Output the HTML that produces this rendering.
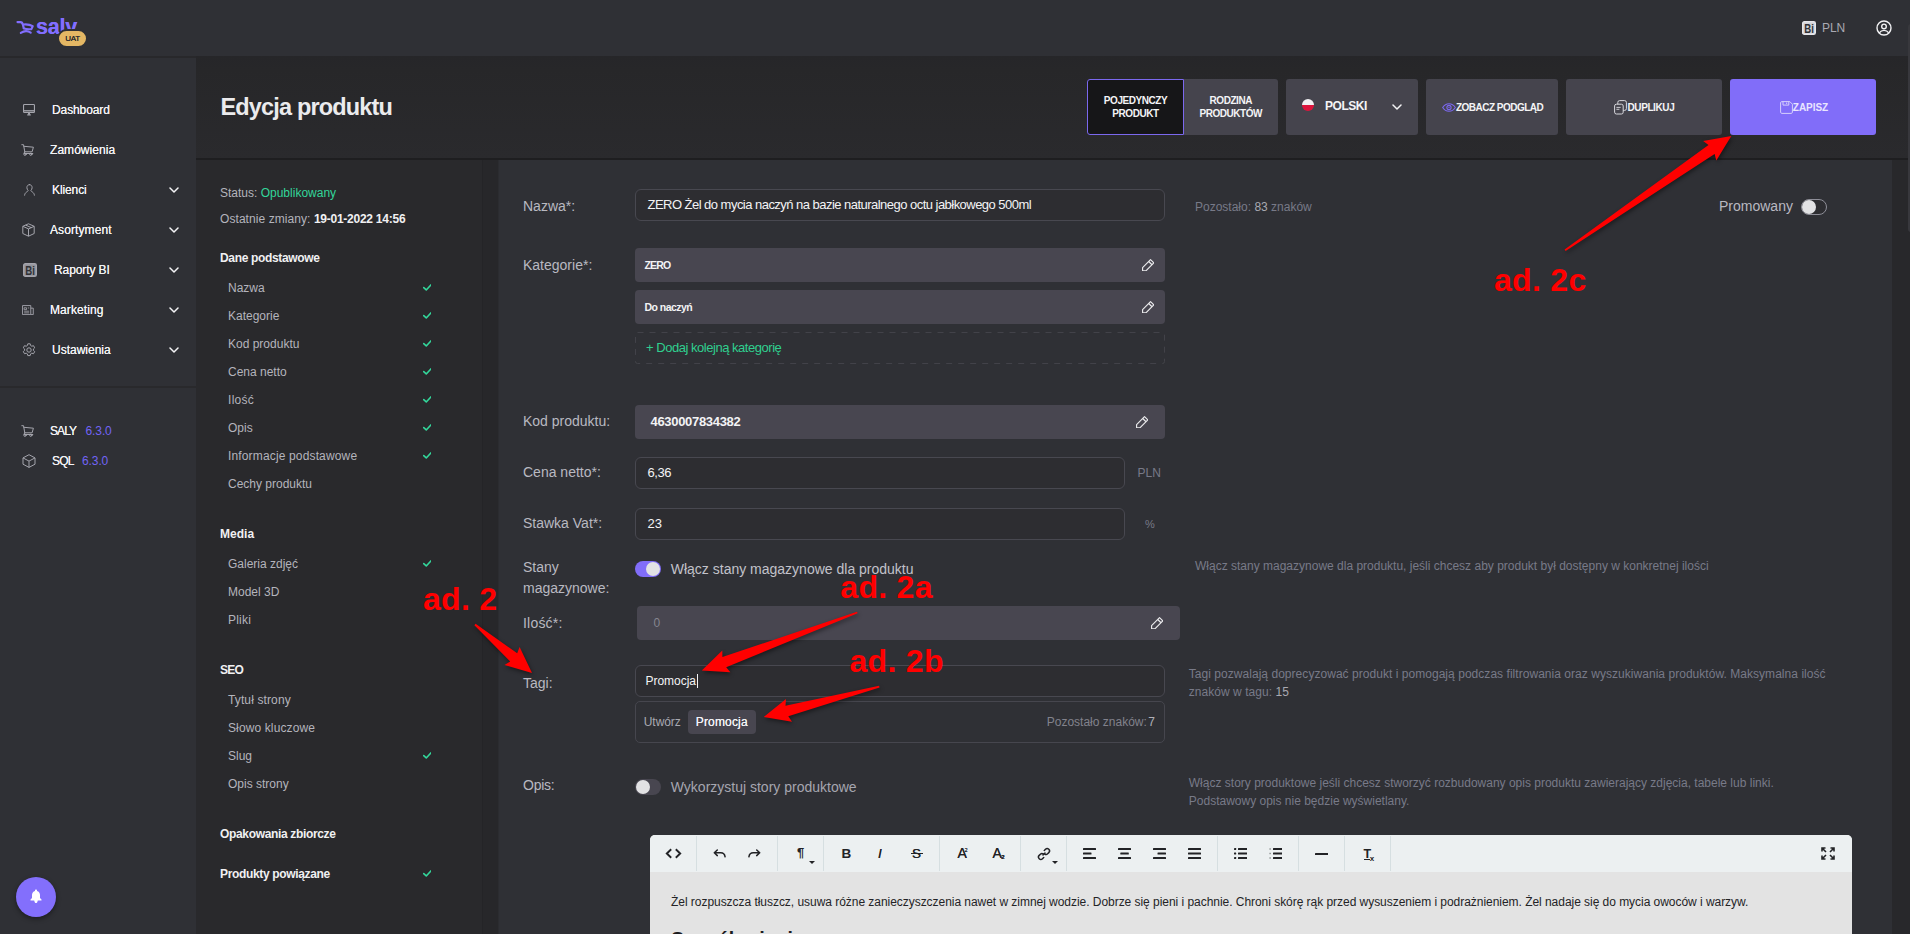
<!DOCTYPE html>
<html lang="pl">
<head>
<meta charset="utf-8">
<title>Edycja produktu</title>
<style>
*{box-sizing:border-box;margin:0;padding:0}
html,body{width:1910px;height:934px;overflow:hidden;background:#28282b;font-family:"Liberation Sans",Arial,sans-serif;color:#e6e6ea}
body{position:relative}
.abs{position:absolute;white-space:nowrap;line-height:1}
/* top bar */
#topbar{position:absolute;left:0;top:0;width:1910px;height:56px;background:#2f3035}
#sidebar{position:absolute;left:0;top:58px;width:196px;height:876px;background:#2f3035}
#sidebar .divider{position:absolute;left:0;top:328px;width:196px;height:2px;background:#29292c}
.mi{position:absolute;left:0;width:196px;height:40px}
.mi .t{position:absolute;top:13px;font-size:12px;line-height:14px;color:#f2f2f4;white-space:nowrap;letter-spacing:-0.1px;text-shadow:0 0 0.4px #f2f2f4}
.mi svg{position:absolute}
.mi .chev{left:169px;top:16.5px}
.mi .ver{color:#7264f6;text-shadow:none}
/* page header */
#pagehead{position:absolute;left:196px;top:56px;width:1714px;height:102px;background:linear-gradient(180deg,#262629 0,#272729 14%,#2a2a2d 100%)}
#headline{position:absolute;left:196px;top:158px;width:1714px;height:2px;background:#1e1e20}
h1{position:absolute;left:24.5px;top:37px;font-size:23.5px;line-height:28px;font-weight:bold;color:#ebebed;white-space:nowrap;letter-spacing:-0.84px}
.btn{position:absolute;top:23px;height:55.5px;border-radius:3px;background:#45444d;color:#f4f4f6;font-weight:bold;font-size:9px;text-align:center;white-space:nowrap}
/* left nav */
#leftnav{position:absolute;left:196px;top:160px;width:286px;height:774px;background:#29292c}
#gutter{position:absolute;left:482px;top:160px;width:16px;height:774px;background:#27272a;border-left:1px solid #242427}
#rightgutter{position:absolute;left:1892px;top:160px;width:18px;height:774px;background:#28282b}
#leftnav .ln{position:absolute;font-size:12px;line-height:14px;white-space:nowrap;color:#b4b4bc;letter-spacing:0}
#leftnav .h{font-weight:bold;color:#f0f0f2;left:24px;letter-spacing:-0.34px}
#leftnav .i{left:32px}
#leftnav svg.ck{position:absolute;left:226.7px;width:8.8px;height:7px;margin-top:.5px}
/* form */
#form{position:absolute;left:498px;top:160px;width:1394px;height:774px;background:#2f3035;overflow:hidden}
.lbl{position:absolute;left:25px;font-size:14px;line-height:21px;color:#b9b9c1;white-space:nowrap;letter-spacing:0}
.inp{position:absolute;left:136.5px;height:32px;border:1px solid #484850;border-radius:6px;background:#2d2d31;color:#f3f3f5;font-size:13px;line-height:30px;padding-left:12px;white-space:nowrap;letter-spacing:-0.3px}
.box{position:absolute;left:136.5px;height:33.5px;border-radius:4px;background:#484650;color:#f3f3f5;font-weight:bold;white-space:nowrap}
.hint{position:absolute;font-size:12px;line-height:18px;color:#787a88;white-space:nowrap;letter-spacing:0}
.hint b{font-weight:normal;color:#a9a9b1}
.tog{position:absolute;width:26px;height:16px;border-radius:8px}
.tog i{position:absolute;top:1px;width:14px;height:14px;border-radius:7px;background:#e2e2e4}
.red{position:absolute;font-weight:bold;color:#ff0000;font-size:32px;line-height:32px;letter-spacing:.3px;margin-top:.5px;white-space:nowrap;font-family:"Liberation Sans",Arial,sans-serif}
#anno{position:absolute;left:0;top:0;width:1910px;height:934px;pointer-events:none}
</style>
</head>
<body>
<header id="topbar">
<svg class="abs" style="left:14px;top:18px" width="24" height="18" viewBox="14 18 24 18" fill="none" stroke="#826eff" stroke-linecap="round" stroke-linejoin="round"><path d="M17.500 22.100h2.900c1.700 0 2.200 1.200 2.500 2.600l.8 3.300" stroke-width="2.200"/><path d="M23.600 24.500c3.400-.3 6.800.3 9.100 1.700l-1.300 2.900c-2.500.300-5.200.100-7.600-.500" stroke-width="2.100"/><path d="M20.800 32.900c3.100-2.100 7.200-2.100 9.900-.200" stroke-width="2.100"/></svg>
<div class="abs" id="logo" style="left:36px;top:15px;font-size:21.5px;line-height:24px;font-weight:bold;color:#826eff;letter-spacing:-0.2px;text-shadow:0 0 .6px #826eff">saly</div>
<div class="abs" id="uat" style="left:57px;top:29px;width:31px;height:19px;border:2px solid #2f3035;border-radius:10px;background:#e4b764;color:#2b2b2e;font-size:8px;line-height:15px;text-align:center;letter-spacing:-0.25px;text-shadow:0 0 .45px #2b2b2e">UAT</div>
<svg class="abs" style="left:1802px;top:21px" width="14" height="14" viewBox="0 0 14 14"><rect x=".7" y=".7" width="12.600" height="12.600" rx="1.600" fill="#e6e6ea" fill-opacity=".9" stroke="#e6e6ea" stroke-width="1.400"/><text x="3" y="11.700" transform="scale(.74 1)" font-family="Liberation Sans,Arial,sans-serif" font-weight="bold" font-size="13" fill="#2f3035">Bi</text></svg>
<div class="abs" id="pln" style="left:1822px;top:21px;font-size:12px;line-height:14px;color:#a9a9b2;letter-spacing:-0.12px">PLN</div>
<svg class="abs" style="left:1876px;top:20px" width="16" height="16" viewBox="0 0 16 16" fill="none" stroke="#f2f2f4" stroke-width="1.400"><circle cx="8" cy="8" r="7"/><circle cx="8" cy="6.400" r="2.300"/><path d="M3.300 12.900c1.300-1.800 2.900-2.500 4.700-2.500s3.400.7 4.700 2.500"/></svg>
</header>
<aside id="sidebar">
<div class="mi" style="top:32px"><svg style="left:23px;top:14px" width="12" height="12" viewBox="0 0 12 12" fill="none" stroke="#a4a4ac" stroke-width="1.100"><rect x=".55" y=".55" width="10.900" height="7.900" rx=".8"/><path d="M.6 6.800h10.800" stroke-width="1.400"/><path d="M4.200 10.900h3.600" stroke-width="1.200"/><path d="M6 8.500v2.200" stroke-width="2"/></svg><span class="t" style="left:52px">Dashboard</span></div>
<div class="mi" style="top:72px"><svg style="left:21px;top:14px" width="14" height="12" viewBox="0 0 14 12" fill="none" stroke="#a4a4ac" stroke-width="1" stroke-linejoin="round" stroke-linecap="round"><path d="M.8.700h1.700l1.300 7.100M3 2.300l9.400.9-1.300 4.600H3.800M3.800 7.800l-1 1.700h9"/><circle cx="4" cy="10.300" r="1.100"/><circle cx="9.800" cy="10.300" r="1.100"/></svg><span class="t" style="left:50px;letter-spacing:0.05px">Zamówienia</span></div>
<div class="mi" style="top:112px"><svg style="left:24px;top:14px" width="11" height="12" viewBox="0 0 11 12" fill="none" stroke="#a4a4ac" stroke-width="1" stroke-linecap="round"><path d="M5.500.600c1.500 0 2.600 1.300 2.600 3 0 1.200-.5 2.200-1.200 2.800 0 1.600 3.300 1.300 3.500 4.800M5.500.600c-1.500 0-2.600 1.300-2.600 3 0 1.200.5 2.200 1.200 2.800 0 1.600-3.300 1.300-3.500 4.800"/></svg><span class="t" style="left:52px">Klienci</span><svg class="chev" width="10" height="6" viewBox="0 0 10 6" fill="none" stroke="#f4f4f6" stroke-width="1.500" stroke-linecap="round" stroke-linejoin="round"><path d="M1 1l4 4 4-4"/></svg></div>
<div class="mi" style="top:152px"><svg style="left:22px;top:13px" width="13" height="14" viewBox="0 0 13 14" fill="none" stroke="#a4a4ac" stroke-width="1" stroke-linejoin="round"><path d="M6.500.8l5.700 2.500v7.200l-5.700 2.700-5.700-2.700V3.300z"/><path d="M.8 3.300l5.700 2.600 5.700-2.600M6.500 5.900v7.300"/><path d="M3.600 2.100l5.800 2.600"/></svg><span class="t" style="left:50px;letter-spacing:0.10px">Asortyment</span><svg class="chev" width="10" height="6" viewBox="0 0 10 6" fill="none" stroke="#f4f4f6" stroke-width="1.500" stroke-linecap="round" stroke-linejoin="round"><path d="M1 1l4 4 4-4"/></svg></div>
<div class="mi" style="top:192px"><svg style="left:23px;top:13px" width="14" height="14" viewBox="0 0 14 14"><rect x=".7" y=".7" width="12.600" height="12.600" rx="1.600" fill="#a4a4ac" fill-opacity=".85" stroke="#a4a4ac" stroke-width="1.400"/><text x="3" y="11.700" transform="scale(.74 1)" font-family="Liberation Sans,Arial,sans-serif" font-weight="bold" font-size="13" fill="#2f3035">Bi</text></svg><span class="t" style="left:54px">Raporty BI</span><svg class="chev" width="10" height="6" viewBox="0 0 10 6" fill="none" stroke="#f4f4f6" stroke-width="1.500" stroke-linecap="round" stroke-linejoin="round"><path d="M1 1l4 4 4-4"/></svg></div>
<div class="mi" style="top:232px"><svg style="left:22px;top:15px" width="12" height="10.200" viewBox="0 0 13 11" fill="none" stroke="#a4a4ac" stroke-width="1" stroke-linejoin="round"><path d="M.6.600h8.900v9.800H.6z"/><path d="M9.500 3.400h2.700v7H9.500"/><path d="M2.300 3h2.600v2H2.300zM6.300 3.200h1.500M2.300 6.700h5.500M2.300 8.500h5.500" stroke-width=".9"/></svg><span class="t" style="left:50px;letter-spacing:0.10px">Marketing</span><svg class="chev" width="10" height="6" viewBox="0 0 10 6" fill="none" stroke="#f4f4f6" stroke-width="1.500" stroke-linecap="round" stroke-linejoin="round"><path d="M1 1l4 4 4-4"/></svg></div>
<div class="mi" style="top:272px"><svg style="left:22px;top:13px" width="14" height="14" viewBox="0 0 14 14" fill="none" stroke="#a4a4ac" stroke-width="1" stroke-linejoin="round"><circle cx="7" cy="7" r="2.200"/><path d="M5.800.8h2.400l.4 1.700 1.200.7 1.700-.5 1.200 2.100-1.300 1.200v1.400l1.300 1.200-1.200 2.100-1.700-.5-1.200.7-.4 1.700H5.800l-.4-1.700-1.200-.7-1.700.5-1.200-2.100 1.300-1.200V6l-1.300-1.200 1.200-2.100 1.700.5 1.200-.7z"/></svg><span class="t" style="left:52px;letter-spacing:0.00px">Ustawienia</span><svg class="chev" width="10" height="6" viewBox="0 0 10 6" fill="none" stroke="#f4f4f6" stroke-width="1.500" stroke-linecap="round" stroke-linejoin="round"><path d="M1 1l4 4 4-4"/></svg></div>
<div class="divider"></div>
<div class="mi" style="top:353px"><svg style="left:21px;top:14px" width="14" height="12" viewBox="0 0 14 12" fill="none" stroke="#a4a4ac" stroke-width="1" stroke-linejoin="round" stroke-linecap="round"><path d="M.8.700h1.700l1.300 7.100M3 2.300l9.400.9-1.300 4.600H3.800M3.800 7.800l-1 1.700h9"/><circle cx="4" cy="10.300" r="1.100"/><circle cx="9.800" cy="10.300" r="1.100"/></svg><span class="t" style="left:50px;letter-spacing:-0.9px">SALY</span><span class="t ver" style="left:85.500px">6.3.0</span></div>
<div class="mi" style="top:383px"><svg style="left:22px;top:13px" width="14" height="14" viewBox="0 0 14 14" fill="none" stroke="#a4a4ac" stroke-width="1" stroke-linejoin="round"><path d="M7 .7l6 3.200v6.300l-6 3.200-6-3.200V3.900z"/><path d="M1 3.900l6 3.200 6-3.200M7 7.100v6.300"/></svg><span class="t" style="left:52px;letter-spacing:-0.8px">SQL</span><span class="t ver" style="left:82px">6.3.0</span></div>
<div id="bell" style="position:absolute;left:16px;top:819px;width:40px;height:40px;border-radius:50%;background:#836ffc;box-shadow:0 2px 5px rgba(0,0,0,.4)"><svg style="position:absolute;left:14.300px;top:11.700px" width="12" height="15" viewBox="0 0 12 15" fill="#ffffff"><path d="M6 .6c.6 0 1 .4 1 1v.5c1.900.5 3 2.100 3 4v2.800l1.500 1.700v.8h-3.700c-.3 1.700-1 2.600-1.800 2.600s-1.500-.9-1.800-2.600H.5v-.8L2 8.900V6.100c0-1.900 1.100-3.500 3-4v-.5c0-.6.4-1 1-1z"/></svg></div>
</aside>
<section id="pagehead">
<h1>Edycja produktu</h1>
<div class="btn" id="b1" style="left:891px;width:97px;background:#161618;border:1px solid #7b68ee;border-radius:3px 0 0 3px;line-height:13px;padding-top:14px;font-size:10px;letter-spacing:-0.45px">POJEDYNCZY<br>PRODUKT</div>
<div class="btn" id="b2" style="left:988px;width:93.500px;border-radius:0 3px 3px 0;line-height:13px;padding-top:15px;font-size:10px;letter-spacing:-0.45px">RODZINA<br>PRODUKTÓW</div>
<div class="btn" id="b3" style="left:1090px;width:132px">
<div class="abs" style="left:15.500px;top:19.800px;width:12.500px;height:12.500px;border-radius:50%;background:linear-gradient(#f1f1f3 0 50%,#dc143c 50% 100%)"></div>
<span class="abs" id="polski" style="left:39px;top:20px;font-size:12px;line-height:14px;letter-spacing:-0.46px">POLSKI</span>
<svg class="abs" style="left:105.500px;top:25px" width="10" height="6" viewBox="0 0 10 6" fill="none" stroke="#f4f4f6" stroke-width="1.500" stroke-linecap="round" stroke-linejoin="round"><path d="M1 1l4 4 4-4"/></svg>
</div>
<div class="btn" id="b4" style="left:1230px;width:131.500px">
<svg class="abs" style="left:16px;top:23.500px" width="14" height="9" viewBox="0 0 14 9" fill="none" stroke="#7b68ee" stroke-width="1.100"><path d="M.7 4.500C2.300 1.900 4.500.700 7 .7s4.700 1.200 6.300 3.800C11.700 7.100 9.500 8.300 7 8.300S2.300 7.100.7 4.500z"/><circle cx="7" cy="4.500" r="2.100"/><circle cx="7" cy="4.500" r=".7" fill="#7b68ee" stroke="none"/></svg>
<span class="abs" id="zobacz" style="left:30px;top:22.500px;font-size:10px;line-height:12px;letter-spacing:-0.52px">ZOBACZ PODGLĄD</span>
</div>
<div class="btn" id="b5" style="left:1370px;width:156px">
<svg class="abs" style="left:48px;top:21px" width="13" height="15" viewBox="0 0 13 15" fill="none" stroke="#d9d9de" stroke-width="1"><rect x="3.800" y=".6" width="8.600" height="9.800" rx="1.800"/><rect x=".6" y="4.200" width="8.600" height="9.800" rx="1.800" fill="#45444d"/><path d="M2.400 7.400h4.200M2.400 9.300h3" stroke-width=".9"/></svg>
<span class="abs" id="dupl" style="left:61.500px;top:22.500px;font-size:10px;line-height:12px;letter-spacing:-0.4px">DUPLIKUJ</span>
</div>
<div class="btn" id="b6" style="left:1534px;width:146px;background:#816df9;color:#e9e5ff">
<svg class="abs" style="left:49.500px;top:22px" width="13" height="13" viewBox="0 0 13 13" fill="none" stroke="#d6cffc" stroke-width="1" stroke-linejoin="round"><path d="M.6 1.800c0-.7.5-1.200 1.200-1.200h8l2.600 2.600v8c0 .7-.5 1.200-1.200 1.200H1.800c-.7 0-1.200-.5-1.200-1.200z"/><path d="M3 .7v3.400h5.800V.7M6.700 1.500v1.600"/></svg>
<span class="abs" id="zapisz" style="left:62.800px;top:22.500px;font-size:10px;line-height:12px;letter-spacing:-0.03px">ZAPISZ</span>
</div>
</section>
<div id="headline"></div>
<nav id="leftnav">
<div class="ln" id="st" style="left:24px;top:25.55px">Status: <span style="color:#33d69a">Opublikowany</span></div>
<div class="ln" id="oz" style="left:24px;top:51.8px;letter-spacing:0.07px">Ostatnie zmiany: <b style="color:#f0f0f2;letter-spacing:-0.25px">19-01-2022 14:56</b></div>
<div class="ln h" id="n1" style="top:90.55px">Dane podstawowe</div>
<div class="ln i" id="n2" style="top:120.55px">Nazwa</div><svg class="ck" style="top:123.5px" viewBox="0 0 10 8" fill="none" stroke="#33d69a" stroke-width="1.900" stroke-linecap="round" stroke-linejoin="round"><path d="M.8 4.200l2.900 2.600L9.200.9"/></svg>
<div class="ln i" id="n3" style="top:148.55px">Kategorie</div><svg class="ck" style="top:151.5px" viewBox="0 0 10 8" fill="none" stroke="#33d69a" stroke-width="1.900" stroke-linecap="round" stroke-linejoin="round"><path d="M.8 4.200l2.900 2.600L9.200.9"/></svg>
<div class="ln i" id="n4" style="top:176.55px">Kod produktu</div><svg class="ck" style="top:179.5px" viewBox="0 0 10 8" fill="none" stroke="#33d69a" stroke-width="1.900" stroke-linecap="round" stroke-linejoin="round"><path d="M.8 4.200l2.900 2.600L9.200.9"/></svg>
<div class="ln i" id="n5" style="top:204.55px">Cena netto</div><svg class="ck" style="top:207.5px" viewBox="0 0 10 8" fill="none" stroke="#33d69a" stroke-width="1.900" stroke-linecap="round" stroke-linejoin="round"><path d="M.8 4.200l2.900 2.600L9.200.9"/></svg>
<div class="ln i" id="n6" style="top:232.55px;letter-spacing:0.3px">Ilość</div><svg class="ck" style="top:235.5px" viewBox="0 0 10 8" fill="none" stroke="#33d69a" stroke-width="1.900" stroke-linecap="round" stroke-linejoin="round"><path d="M.8 4.200l2.900 2.600L9.200.9"/></svg>
<div class="ln i" id="n7" style="top:260.55px">Opis</div><svg class="ck" style="top:263.5px" viewBox="0 0 10 8" fill="none" stroke="#33d69a" stroke-width="1.900" stroke-linecap="round" stroke-linejoin="round"><path d="M.8 4.200l2.900 2.600L9.200.9"/></svg>
<div class="ln i" id="n8" style="top:288.55px;letter-spacing:0.15px">Informacje podstawowe</div><svg class="ck" style="top:291.5px" viewBox="0 0 10 8" fill="none" stroke="#33d69a" stroke-width="1.900" stroke-linecap="round" stroke-linejoin="round"><path d="M.8 4.200l2.900 2.600L9.200.9"/></svg>
<div class="ln i" id="n9" style="top:316.55px">Cechy produktu</div>
<div class="ln h" id="n10" style="top:366.55px;letter-spacing:0.04px">Media</div>
<div class="ln i" id="n11" style="top:396.55px">Galeria zdjęć</div><svg class="ck" style="top:399.5px" viewBox="0 0 10 8" fill="none" stroke="#33d69a" stroke-width="1.900" stroke-linecap="round" stroke-linejoin="round"><path d="M.8 4.200l2.900 2.600L9.200.9"/></svg>
<div class="ln i" id="n12" style="top:424.55px">Model 3D</div>
<div class="ln i" id="n13" style="top:452.55px;letter-spacing:0.2px">Pliki</div>
<div class="ln h" id="n14" style="top:502.55px;letter-spacing:-0.78px">SEO</div>
<div class="ln i" id="n15" style="top:532.55px;letter-spacing:0.12px">Tytuł strony</div>
<div class="ln i" id="n16" style="top:560.55px;letter-spacing:0.12px">Słowo kluczowe</div>
<div class="ln i" id="n17" style="top:588.55px">Slug</div><svg class="ck" style="top:591.5px" viewBox="0 0 10 8" fill="none" stroke="#33d69a" stroke-width="1.900" stroke-linecap="round" stroke-linejoin="round"><path d="M.8 4.200l2.900 2.600L9.200.9"/></svg>
<div class="ln i" id="n18" style="top:616.55px">Opis strony</div>
<div class="ln h" id="n19" style="top:666.55px">Opakowania zbiorcze</div>
<div class="ln h" id="n20" style="top:706.55px">Produkty powiązane</div><svg class="ck" style="top:709.5px" viewBox="0 0 10 8" fill="none" stroke="#33d69a" stroke-width="1.900" stroke-linecap="round" stroke-linejoin="round"><path d="M.8 4.200l2.900 2.600L9.200.9"/></svg>
</nav>
<div id="gutter"></div>
<main id="form">
<i style="position:absolute;left:0;top:0;width:1px;height:774px;background:#2b2c30"></i>
<label class="lbl" id="l1" style="top:35.65px">Nazwa*:</label>
<div class="inp" id="nazwa" style="top:29px;width:530px;letter-spacing:-0.53px">ZERO Żel do mycia naczyń na bazie naturalnego octu jabłkowego 500ml</div>
<div class="hint" id="h1" style="left:697px;top:38.14px">Pozostało: <b>83</b> znaków</div>
<div class="lbl" id="promo" style="left:1221px;top:35.65px">Promowany</div>
<div class="tog" style="left:1303px;top:39px;border:1px solid #8e8e98;background:#2d2d31"><i style="left:0;top:0"></i></div>
<label class="lbl" id="l2" style="top:94.65px">Kategorie*:</label>
<div class="box" style="top:88px;width:530px;font-size:10.5px;line-height:34px;padding-left:10px;letter-spacing:-0.8px"><span id="zero">ZERO</span><svg class="abs" style="left:507px;top:10.5px" width="12.400" height="12.400" viewBox="0 0 12.500 12.500" fill="none" stroke="#ececee" stroke-width="1.150" stroke-linejoin="round"><path d="M8.600.700L11.900 4 3.900 12H.6V8.700zM6.800 2.500l3.300 3.300"/></svg></div>
<div class="box" style="top:130px;width:530px;height:33.5px;font-size:10.5px;line-height:34px;padding-left:10px;letter-spacing:-0.55px"><span id="donacz">Do naczyń</span><svg class="abs" style="left:507px;top:10.5px" width="12.400" height="12.400" viewBox="0 0 12.500 12.500" fill="none" stroke="#ececee" stroke-width="1.150" stroke-linejoin="round"><path d="M8.600.700L11.900 4 3.900 12H.6V8.700zM6.800 2.500l3.300 3.300"/></svg></div>
<div id="addcatbox" style="position:absolute;left:136.500px;top:172px;width:530px;height:32px"><svg class="abs" style="left:0;top:0" width="530" height="32" viewBox="0 0 530 32" fill="none"><rect x=".5" y=".5" width="529" height="31" rx="2" stroke="#424249" stroke-width="1" stroke-dasharray="6 6" stroke-dashoffset="0"/></svg><span class="abs" id="addcat" style="left:11.500px;top:0;color:#30cf8f;font-size:13px;line-height:31px;letter-spacing:-0.47px">+ Dodaj kolejną kategorię</span></div>
<label class="lbl" id="l3" style="top:250.65px">Kod produktu:</label>
<div class="box" id="kod" style="top:245px;width:530px;font-size:13px;line-height:34px;padding-left:16px;letter-spacing:-0.31px"><span id="kodt">4630007834382</span><svg class="abs" style="left:501px;top:10.5px" width="12.400" height="12.400" viewBox="0 0 12.500 12.500" fill="none" stroke="#ececee" stroke-width="1.150" stroke-linejoin="round"><path d="M8.600.700L11.900 4 3.900 12H.6V8.700zM6.800 2.500l3.300 3.300"/></svg></div>
<label class="lbl" id="l4" style="top:301.65px">Cena netto*:</label>
<div class="inp" id="cena" style="top:297px;width:490px;letter-spacing:-0.45px">6,36</div>
<div class="hint" id="pln2" style="left:639.500px;top:304.14px">PLN</div>
<label class="lbl" id="l5" style="top:352.65px">Stawka Vat*:</label>
<div class="inp" id="vat" style="top:347.500px;width:490px;letter-spacing:-0.1px">23</div>
<div class="hint" style="left:647px;top:355.14px;font-size:11px">%</div>
<label class="lbl" id="l6" style="top:396.65px">Stany<br>magazynowe:</label>
<div class="tog" style="left:136.500px;top:400.750px;background:#816df9"><i style="left:11px"></i></div>
<div class="lbl" id="wl" style="left:172.750px;top:399.00px;color:#c2c2ca">Włącz stany magazynowe dla produktu</div>
<div class="hint" id="h2" style="left:697px;top:396.84px">Włącz stany magazynowe dla produktu, jeśli chcesz aby produkt był dostępny w konkretnej ilości</div>
<label class="lbl" id="l7" style="top:452.95px;letter-spacing:0.2px">Ilość*:</label>
<div class="box" style="left:139px;top:446px;width:543px;font-size:12px;font-weight:normal;color:#85858f;line-height:34px;padding-left:16.500px">0<svg class="abs" style="left:513.5px;top:10.5px" width="12.400" height="12.400" viewBox="0 0 12.500 12.500" fill="none" stroke="#ececee" stroke-width="1.150" stroke-linejoin="round"><path d="M8.600.700L11.900 4 3.900 12H.6V8.700zM6.800 2.500l3.300 3.300"/></svg></div>
<label class="lbl" id="l8" style="top:512.95px">Tagi:</label>
<div class="inp" id="tagi" style="top:505px;width:530px;padding-left:10px;font-size:12px;letter-spacing:-0.02px">Promocja<span style="display:inline-block;width:1px;height:14px;background:#f3f3f5;vertical-align:-2.500px;margin-left:.5px"></span></div>
<div class="hint" id="h3" style="left:690.800px;top:505.14px;letter-spacing:0.04px">Tagi pozwalają doprecyzować produkt i pomogają podczas filtrowania oraz wyszukiwania produktów. Maksymalna ilość<br>znaków w tagu: <b>15</b></div>
<div id="create" style="position:absolute;left:136.500px;top:541.250px;width:530px;height:42px;border:1px solid #46464e;border-radius:5px">
<span class="abs" id="utw" style="left:8.250px;top:12.34px;font-size:12px;line-height:14px;color:#a9a9b1;letter-spacing:-0.06px">Utwórz</span>
<span class="abs" id="chip" style="left:52px;top:7.750px;width:68.500px;height:24px;border-radius:4px;background:#484650;color:#f3f3f5;font-size:12px;line-height:25.500px;text-align:center;letter-spacing:0.16px;text-shadow:0 0 .5px #f3f3f5">Promocja</span>
<span class="abs" id="poz" style="right:8.500px;top:13.09px;font-size:12px;line-height:14px;color:#82828c;letter-spacing:0px">Pozostało znaków:<span style="color:#b0b0b8;margin-left:1.500px">7</span></span>
</div>
<label class="lbl" id="l9" style="top:614.95px;letter-spacing:-0.25px">Opis:</label>
<div class="tog" style="left:137px;top:618.750px;background:#484650"><i style="left:1px"></i></div>
<div class="lbl" id="wy" style="left:172.750px;top:617.05px;color:#a6a6b0">Wykorzystuj story produktowe</div>
<div class="hint" id="h4" style="left:690.800px;top:614.34px">Włącz story produktowe jeśli chcesz stworzyć rozbudowany opis produktu zawierający zdjęcia, tabele lub linki.<br>Podstawowy opis nie będzie wyświetlany.</div>
<div id="editor" style="position:absolute;left:152px;top:674.500px;width:1202px;height:110px;border-radius:5px 5px 0 0;background:#e3e3e3;overflow:hidden">
<div id="tb" style="position:absolute;left:0;top:0;width:1202px;height:37.300px;background:#ecf0f1">
<i style="position:absolute;left:45.8px;top:1.500px;width:1px;height:35px;background:#d6dfe1"></i><i style="position:absolute;left:127.0px;top:1.500px;width:1px;height:35px;background:#d6dfe1"></i><i style="position:absolute;left:173.0px;top:1.500px;width:1px;height:35px;background:#d6dfe1"></i><i style="position:absolute;left:289.0px;top:1.500px;width:1px;height:35px;background:#d6dfe1"></i><i style="position:absolute;left:370.0px;top:1.500px;width:1px;height:35px;background:#d6dfe1"></i><i style="position:absolute;left:415.9px;top:1.500px;width:1px;height:35px;background:#d6dfe1"></i><i style="position:absolute;left:567.1px;top:1.500px;width:1px;height:35px;background:#d6dfe1"></i><i style="position:absolute;left:648.1px;top:1.500px;width:1px;height:35px;background:#d6dfe1"></i><i style="position:absolute;left:694.2px;top:1.500px;width:1px;height:35px;background:#d6dfe1"></i><i style="position:absolute;left:740.0px;top:1.500px;width:1px;height:35px;background:#d6dfe1"></i>
<svg class="abs" style="left:15px;top:13.5px" width="17" height="11" viewBox="0 0 17 11" fill="none" stroke="#222326" stroke-width="1.900" stroke-linejoin="miter"><path d="M6.200 1.200L1.800 5.500l4.400 4.300M10.800 1.200l4.400 4.300-4.400 4.300"/></svg>
<svg class="abs" style="left:63px;top:14.5px" width="13" height="9" viewBox="0 0 13 9" fill="none" stroke="#222326" stroke-width="1.500" stroke-linejoin="round" stroke-linecap="round"><path d="M4.300 1L1.300 3.800l3 2.800M1.600 3.800h6.200c2.300 0 3.900 1.500 4.300 4"/></svg>
<svg class="abs" style="left:98px;top:14.5px" width="13" height="9" viewBox="0 0 13 9" fill="none" stroke="#222326" stroke-width="1.500" stroke-linejoin="round" stroke-linecap="round"><path d="M8.700 1l3 2.800-3 2.800M11.400 3.800H5.200C2.900 3.800 1.300 5.300.9 7.800"/></svg>
<span class="abs" style="left:147px;top:11.5px;font-size:13px;line-height:14px;font-weight:bold;color:#222326">¶</span><svg class="abs" style="left:159px;top:26.5px" width="6" height="3" viewBox="0 0 6 3" ><path d="M0 0h6L3 3z" fill="#222326"/></svg>
<span class="abs" style="left:191.5px;top:11.700000000000045px;font-size:13.500px;line-height:15px;font-weight:bold;color:#222326">B</span><span class="abs" style="left:228px;top:11.700000000000045px;font-size:13.500px;line-height:15px;font-style:italic;color:#222326;text-shadow:0 0 .4px #222326">I</span><span class="abs" style="left:262px;top:11.700000000000045px;font-size:13.500px;line-height:15px;color:#222326;text-shadow:0 0 .4px #222326">S</span><i style="position:absolute;left:260.5px;top:18.799999999999955px;width:12px;height:1.200px;background:#222326"></i><span class="abs" style="left:307.5px;top:11.700000000000045px;font-size:14px;line-height:15px;color:#222326;text-shadow:0 0 .4px #222326">A<span style="font-size:5px;position:relative;top:-6px;left:-2px">2</span></span><span class="abs" style="left:342.5px;top:11.700000000000045px;font-size:14px;line-height:15px;color:#222326;text-shadow:0 0 .4px #222326">A<span style="font-size:6px;position:relative;top:1px;left:-.5px;font-weight:bold">2</span></span>
<svg class="abs" style="left:386.5px;top:12.0px" width="14" height="14" viewBox="0 0 14 14" fill="none" stroke="#222326" stroke-width="1.500" stroke-linecap="round"><path d="M6 8l2-2M7.300 3.500l1.200-1.200a2.300 2.300 0 013.300 3.300L10.600 6.800a2.300 2.300 0 01-2.900.3M6.700 10.500l-1.200 1.200a2.300 2.300 0 01-3.300-3.300l1.200-1.200a2.300 2.300 0 012.900-.3"/></svg>
<svg class="abs" style="left:402.3px;top:26.5px" width="6" height="3" viewBox="0 0 6 3" ><path d="M0 0h6L3 3z" fill="#222326"/></svg>
<svg class="abs" style="left:433px;top:13.5px" width="13.5" height="11" viewBox="0 0 13.5 11" fill="#222326"><rect x="0" y="0.0" width="13" height="2" rx=".5"/><rect x="0" y="4.5" width="8.5" height="2" rx=".5"/><rect x="0" y="9.0" width="13" height="2" rx=".5"/></svg>
<svg class="abs" style="left:468px;top:13.5px" width="13.5" height="11" viewBox="0 0 13.5 11" fill="#222326"><rect x="0" y="0.0" width="13" height="2" rx=".5"/><rect x="2.3" y="4.5" width="8.5" height="2" rx=".5"/><rect x="0" y="9.0" width="13" height="2" rx=".5"/></svg>
<svg class="abs" style="left:503px;top:13.5px" width="13.5" height="11" viewBox="0 0 13.5 11" fill="#222326"><rect x="0" y="0.0" width="13" height="2" rx=".5"/><rect x="4.5" y="4.5" width="8.5" height="2" rx=".5"/><rect x="0" y="9.0" width="13" height="2" rx=".5"/></svg>
<svg class="abs" style="left:538px;top:13.5px" width="13.5" height="11" viewBox="0 0 13.5 11" fill="#222326"><rect x="0" y="0.0" width="13" height="2" rx=".5"/><rect x="0" y="4.5" width="13" height="2" rx=".5"/><rect x="0" y="9.0" width="13" height="2" rx=".5"/></svg>
<svg class="abs" style="left:583.8px;top:13.5px" width="13.5" height="11" viewBox="0 0 13.5 11" fill="#222326"><rect x="0" y="0.0" width="2.200" height="2" rx=".4"/><rect x="4" y="0.0" width="9.300" height="2" rx=".5"/><rect x="0" y="4.5" width="2.200" height="2" rx=".4"/><rect x="4" y="4.5" width="9.300" height="2" rx=".5"/><rect x="0" y="9.0" width="2.200" height="2" rx=".4"/><rect x="4" y="9.0" width="9.300" height="2" rx=".5"/></svg>
<svg class="abs" style="left:618.8px;top:13.5px" width="13.5" height="11" viewBox="0 0 13.5 11" fill="#222326"><rect x=".6" y="0.3" width="1" height="1.400" opacity=".7"/><rect x="4" y="0.0" width="9.300" height="2" rx=".5"/><rect x=".6" y="4.8" width="1" height="1.400" opacity=".7"/><rect x="4" y="4.5" width="9.300" height="2" rx=".5"/><rect x=".6" y="9.3" width="1" height="1.400" opacity=".7"/><rect x="4" y="9.0" width="9.300" height="2" rx=".5"/></svg>
<svg class="abs" style="left:664.8px;top:18.0px" width="13.5" height="2" viewBox="0 0 13.5 2" fill="#222326"><rect width="13.300" height="2" rx=".5"/></svg>
<span class="abs" style="left:713.5px;top:12.0px;font-size:12.500px;line-height:14px;font-weight:bold;color:#222326">T<span style="font-size:8px;position:relative;top:3px;left:-1.500px">x</span></span><i style="position:absolute;left:713.8px;top:24.100000000000023px;width:6px;height:1.300px;background:#222326"></i><svg class="abs" style="left:1171px;top:12.5px" width="14" height="13" viewBox="0 0 14 13" fill="none" stroke="#222326" stroke-width="1.600"><path d="M1 4.500V1h3.500M1 1l4 4M9.500 1H13v3.500M13 1L9 5M1 8.500V12h3.500M1 12l4-4M13 8.500V12H9.500M13 12L9 8"/></svg>
</div>
<p id="para" class="abs" style="left:21px;top:60.54px;font-size:12px;line-height:14px;color:#232326;letter-spacing:-0.04px">Żel rozpuszcza tłuszcz, usuwa różne zanieczyszczenia nawet w zimnej wodzie. Dobrze się pieni i pachnie. Chroni skórę rąk przed wysuszeniem i podrażnieniem. Żel nadaje się do mycia owoców i warzyw.</p>
<h2 id="h2x" class="abs" style="left:21px;top:92.5px;font-size:19.5px;line-height:24px;font-weight:bold;color:#1c1c1f;letter-spacing:-0.35px">Sposób użycia</h2>
</div>
</main>
<div id="rightgutter"></div>
<div id="sbthumb" style="position:absolute;left:1908px;top:24px;width:6px;height:208px;border-radius:3px;background:#38383d"></div>
<div id="anno">
<svg class="abs" style="left:0;top:0;filter:drop-shadow(1.500px 2px 2px rgba(0,0,0,.45))" width="1910" height="934" viewBox="0 0 1910 934" fill="#ff0000">
<polygon points="474.4,625.2 510.2,661.6 504.5,664.9 532.0,673.0 519.6,647.1 517.2,653.3 475.6,623.8"/>
<polygon points="857.0,611.7 722.4,657.1 722.3,650.4 701.8,670.5 730.4,672.3 726.2,667.2 857.6,613.3"/>
<polygon points="879.1,685.7 785.5,705.8 786.0,699.1 763.7,717.1 792.0,721.7 788.3,716.2 879.5,687.5"/>
<polygon points="1565.6,250.9 1714.6,153.9 1716.3,160.4 1731.3,135.9 1703.1,141.1 1708.5,145.1 1564.6,249.5"/>
</svg>
<div class="red" style="left:422.95px;top:582.41px">ad. 2</div>
<div class="red" style="left:840.3px;top:570.11px">ad. 2a</div>
<div class="red" style="left:849.5px;top:644.41px">ad. 2b</div>
<div class="red" style="left:1494.0px;top:263.41px">ad. 2c</div>
</div>
</body>
</html>
